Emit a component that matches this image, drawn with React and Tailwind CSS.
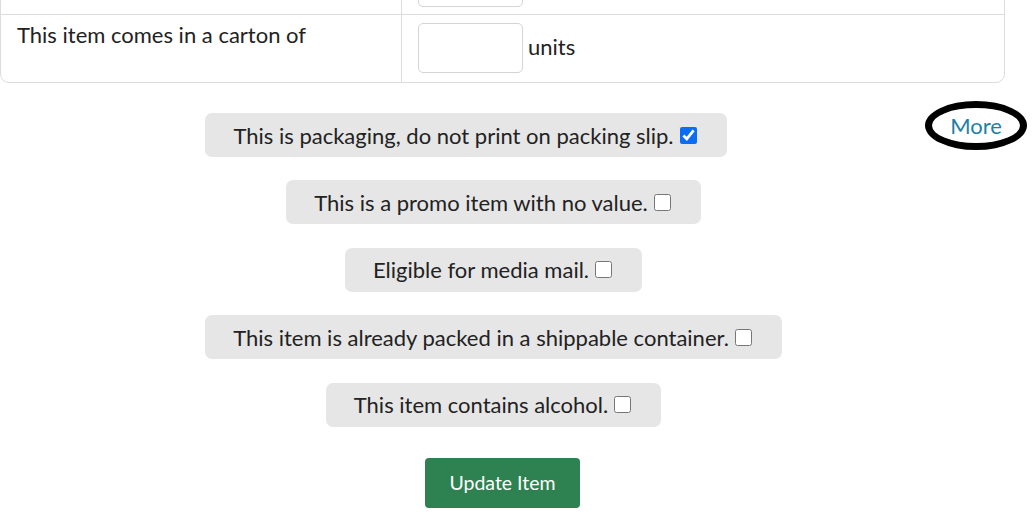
import React from 'react';

const FLAGS = [
    { label: 'This is a promo item with no value.', checked: false },
    { label: 'Eligible for media mail.', checked: false },
    { label: 'This item is already packed in a shippable container.', checked: false },
    { label: 'This item contains alcohol.', checked: false },
];

function Flag({ label, checked }) {
    return (
        <label className="flex items-center h-[44px] pl-[28px] pr-[30px] bg-[#e6e6e6] rounded-[7px] text-[22px] text-[#222]">
            <span>{label}</span>
            <input type="checkbox" defaultChecked={checked} className="ml-[6px] w-[17px] h-[17px] accent-[#0b6cf5]" />
        </label>
    );
}

export default function App() {
    return (
        <div className="relative w-[1035px] h-[516px] overflow-hidden bg-white text-[#222]" style={{ fontFamily: 'Lato, "Noto Sans", sans-serif' }}>
            <div className="w-[1005px] -mt-[52px] border border-[#dddddd] rounded-[9px]">
                <div className="flex h-[66px] border-b border-[#dddddd]">
                    <div className="w-[401px] border-r border-[#dddddd]"></div>
                    <div className="flex items-start pt-[8px] pl-[16px]">
                        <input type="text" className="w-[105px] h-[50px] border border-[#d4d4d4] rounded-[5px]" />
                    </div>
                </div>
                <div className="flex h-[67px]">
                    <div className="w-[401px] border-r border-[#dddddd] pl-[16px] pt-[3px] text-[22px]">This item comes in a carton of</div>
                    <div className="flex items-start pt-[8px] pl-[16px]">
                        <input type="text" className="w-[105px] h-[50px] border border-[#d4d4d4] rounded-[5px]" />
                        <span className="ml-[5px] mt-[7px] text-[22px]">units</span>
                    </div>
                </div>
            </div>

            <div className="flex w-[932px] justify-center mt-[30px]">
                <Flag label="This is packaging, do not print on packing slip." checked={true} />
            </div>
            <div className="absolute left-[925px] top-[101px] w-[102px] h-[49px] flex items-center justify-center rounded-[50%] border-[7px] border-black">
                <a href="#" className="text-[22px] text-[#1f7fa6] leading-none">More</a>
            </div>

            <div className="w-[987px] flex flex-col items-center gap-[23.5px] mt-[23px]">
                {FLAGS.map(f => <Flag key={f.label} label={f.label} checked={f.checked} />)}
            </div>

            <div className="w-[1005px] flex justify-center mt-[31px]">
                <button className="w-[155px] h-[50px] bg-[#2e8150] text-white text-[19.5px] rounded-[4px]">Update Item</button>
            </div>
        </div>
    );
}
